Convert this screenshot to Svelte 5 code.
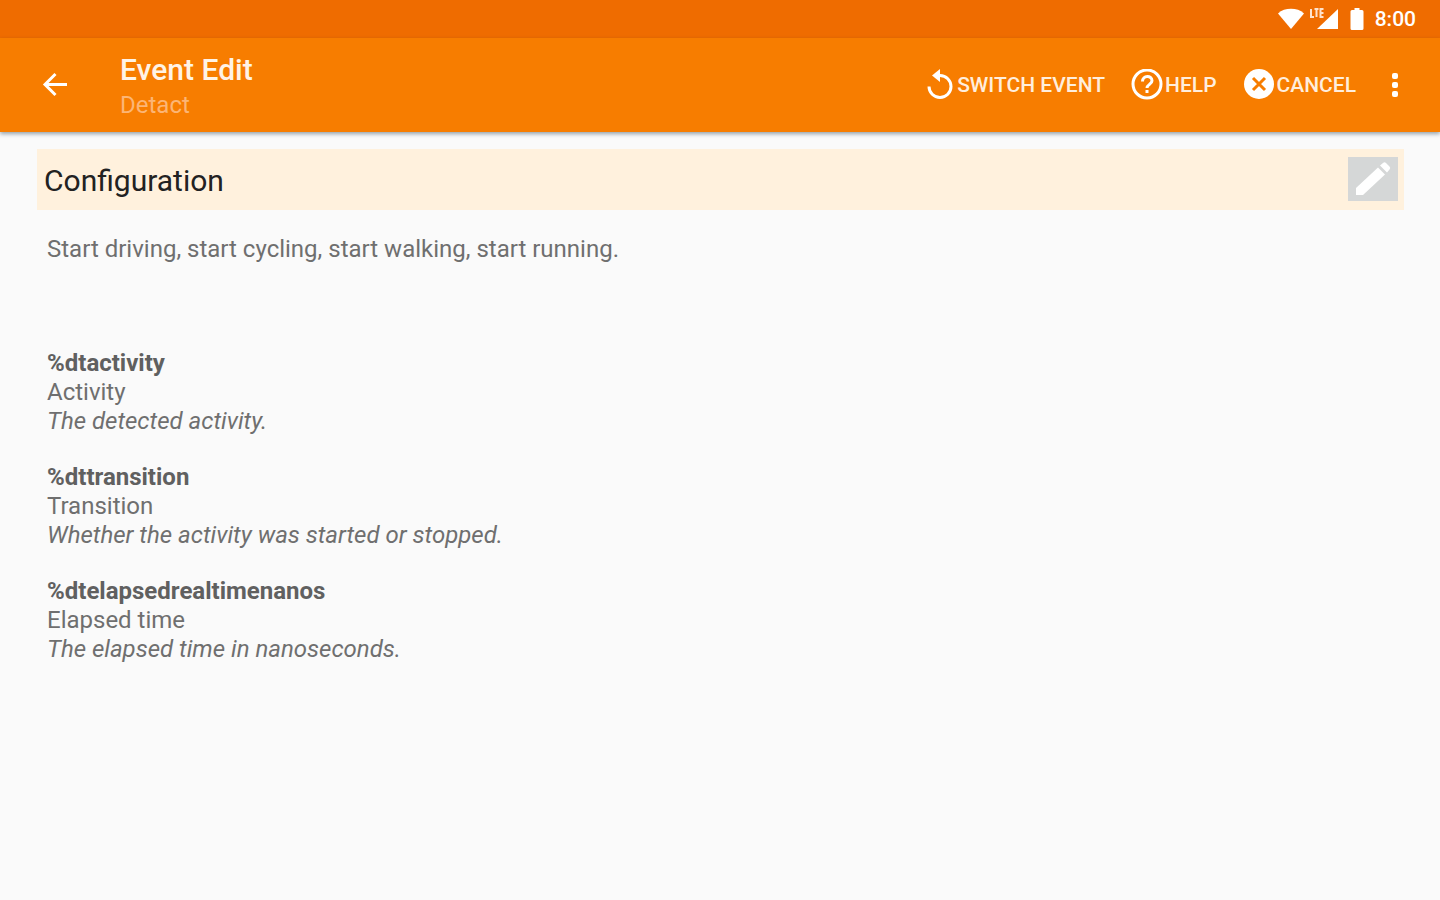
<script>
  const summary = 'Start driving, start cycling, start walking, start running.';
  const variables = [
    { name: '%dtactivity', label: 'Activity', about: 'The detected activity.' },
    { name: '%dttransition', label: 'Transition', about: 'Whether the activity was started or stopped.' },
    { name: '%dtelapsedrealtimenanos', label: 'Elapsed time', about: 'The elapsed time in nanoseconds.' }
  ];
</script>

<div class="status">
  <svg width="28" height="22" viewBox="0 0 28 22" aria-hidden="true">
    <path d="M1 5.500C4.500 2.200 9 .8 14 .8s9.500 1.400 13 4.700L14 21z" />
  </svg>
  <svg class="signal" width="30" height="24" viewBox="0 0 30 24" aria-hidden="true">
    <path d="M29 2v20H8z" />
    <path class="lte" d="M2 2v8h3M5.500 2h4M7.500 2v8M14.500 2h-3v8h3M11.500 6h3" />
  </svg>
  <svg class="battery" width="14" height="24" viewBox="0 0 14 24" aria-hidden="true">
    <path d="M4.500 1h5v2H12q1.500 0 1.500 1.500v17Q13.500 23 12 23H2Q.5 23 .5 21.500v-17Q.5 3 2 3h2.500z" />
  </svg>
  <time>8:00</time>
</div>

<header class="bar">
  <button class="back" aria-label="Back">
    <svg width="26" height="26" viewBox="0 0 26 26" aria-hidden="true">
      <path class="line" d="M25 12.500H3M13.500 2L3 12.500 13.500 23" />
    </svg>
  </button>
  <div class="titles">
    <h1>Event Edit</h1>
    <p>Detact</p>
  </div>
  <nav class="actions">
    <button class="action switch">
      <svg width="26" height="32" viewBox="0 0 26 32" aria-hidden="true">
        <path class="line" d="M8 6.500h5a11 11 0 1 1-11 11" />
        <path d="M13 0v13L5 6.500z" />
      </svg>
      <span>SWITCH EVENT</span>
    </button>
    <button class="action">
      <svg width="32" height="32" viewBox="0 0 32 32" aria-hidden="true">
        <circle class="line" cx="16" cy="15" r="14" />
        <path class="line" d="M11.500 12.500c0-6.500 9.500-6.500 9.500-.8 0 3.500-5 3.800-5 7.300" />
        <path d="M14.500 21h3v3h-3z" />
      </svg>
      <span>HELP</span>
    </button>
    <button class="action">
      <svg width="32" height="32" viewBox="0 0 32 32" aria-hidden="true">
        <circle cx="16" cy="15" r="15" />
        <path class="cross" d="M10 9l12 12M22 9L10 21" />
      </svg>
      <span>CANCEL</span>
    </button>
    <button class="more" aria-label="More options">
      <svg width="6" height="26" viewBox="0 0 6 26" aria-hidden="true">
        <rect y="1" width="6" height="6" rx="2" />
        <rect y="10" width="6" height="6" rx="2" />
        <rect y="19" width="6" height="6" rx="2" />
      </svg>
    </button>
  </nav>
</header>

<main>
  <section class="heading">
    <h2>Configuration</h2>
    <button class="edit" aria-label="Edit configuration">
      <svg width="36" height="36" viewBox="0 0 36 36" aria-hidden="true">
        <path d="M1 27L23 6.500l7 7L8 34H1z" />
        <path d="M25 4.500L28 2q1.500-1.500 3 0l3.500 3.500q1.500 1.500 0 3L32 11.500z" />
      </svg>
    </button>
  </section>
  <div class="details">
    <p>{summary}</p>
    <dl>
      {#each variables as item}
        <div>
          <dt>{item.name}</dt>
          <dd>{item.label}</dd>
          <dd class="about">{item.about}</dd>
        </div>
      {/each}
    </dl>
  </div>
</main>

<style>
  :global(body) {
    background: #fafafa;
    font-family: Roboto, "Liberation Sans", sans-serif;
  }
  h1, h2, p, dl, dd {
    margin: 0;
  }
  svg {
    display: block;
    fill: #fff;
    flex: none;
  }
  button {
    border: 0;
    padding: 0;
    background: none;
    color: inherit;
    font: inherit;
    cursor: pointer;
  }
  .line {
    fill: none;
    stroke: #fff;
    stroke-width: 3;
  }
  .status {
    display: flex;
    align-items: center;
    justify-content: flex-end;
    height: 38px;
    padding-right: 24px;
    background: #ef6c00;
    color: #fff;
  }
  .signal {
    margin-left: 4px;
  }
  .lte {
    fill: none;
    stroke: #ffe2cc;
    stroke-width: 2;
  }
  .battery {
    margin: 0 11px;
  }
  time {
    font-size: 21px;
    font-weight: 500;
  }
  .bar {
    display: flex;
    align-items: center;
    height: 94px;
    padding: 0 40px 0 42px;
    background: #f77d00;
    color: #fff;
    box-shadow: 0 2px 4px rgba(0, 30, 50, 0.4);
  }
  .titles {
    margin-left: 52px;
    padding-top: 4px;
  }
  h1 {
    font-size: 30px;
    line-height: 36px;
    font-weight: 500;
    color: #fff3e6;
  }
  .titles p {
    font-size: 24px;
    line-height: 34px;
    color: #fcb575;
  }
  .actions {
    display: flex;
    align-items: center;
    gap: 26px;
    margin-left: auto;
  }
  .action {
    display: flex;
    align-items: center;
    gap: 2px;
    font-size: 21px;
    font-weight: 500;
    color: #ffeedd;
  }
  .switch {
    gap: 4px;
  }
  .cross {
    stroke: #f77d00;
    stroke-width: 3;
  }
  .more {
    padding: 0 2px 0 10px;
  }
  main {
    padding: 17px 36px 40px 37px;
  }
  .heading {
    display: flex;
    align-items: center;
    justify-content: space-between;
    padding: 7px 6px 9px 7px;
    background: #fff1dd;
  }
  h2 {
    padding-top: 5px;
    font-size: 30px;
    line-height: 40px;
    font-weight: 400;
    color: #222;
  }
  .edit {
    display: grid;
    place-items: center;
    width: 50px;
    height: 44px;
    background: #d5d7d7;
  }
  .details {
    padding: 25px 10px;
    font-size: 24px;
    line-height: 29px;
    color: #6f6f6f;
  }
  dl {
    display: grid;
    gap: 27px;
    margin-top: 85px;
  }
  dt {
    font-weight: 700;
    color: #606060;
  }
  .about {
    font-style: italic;
  }
</style>
